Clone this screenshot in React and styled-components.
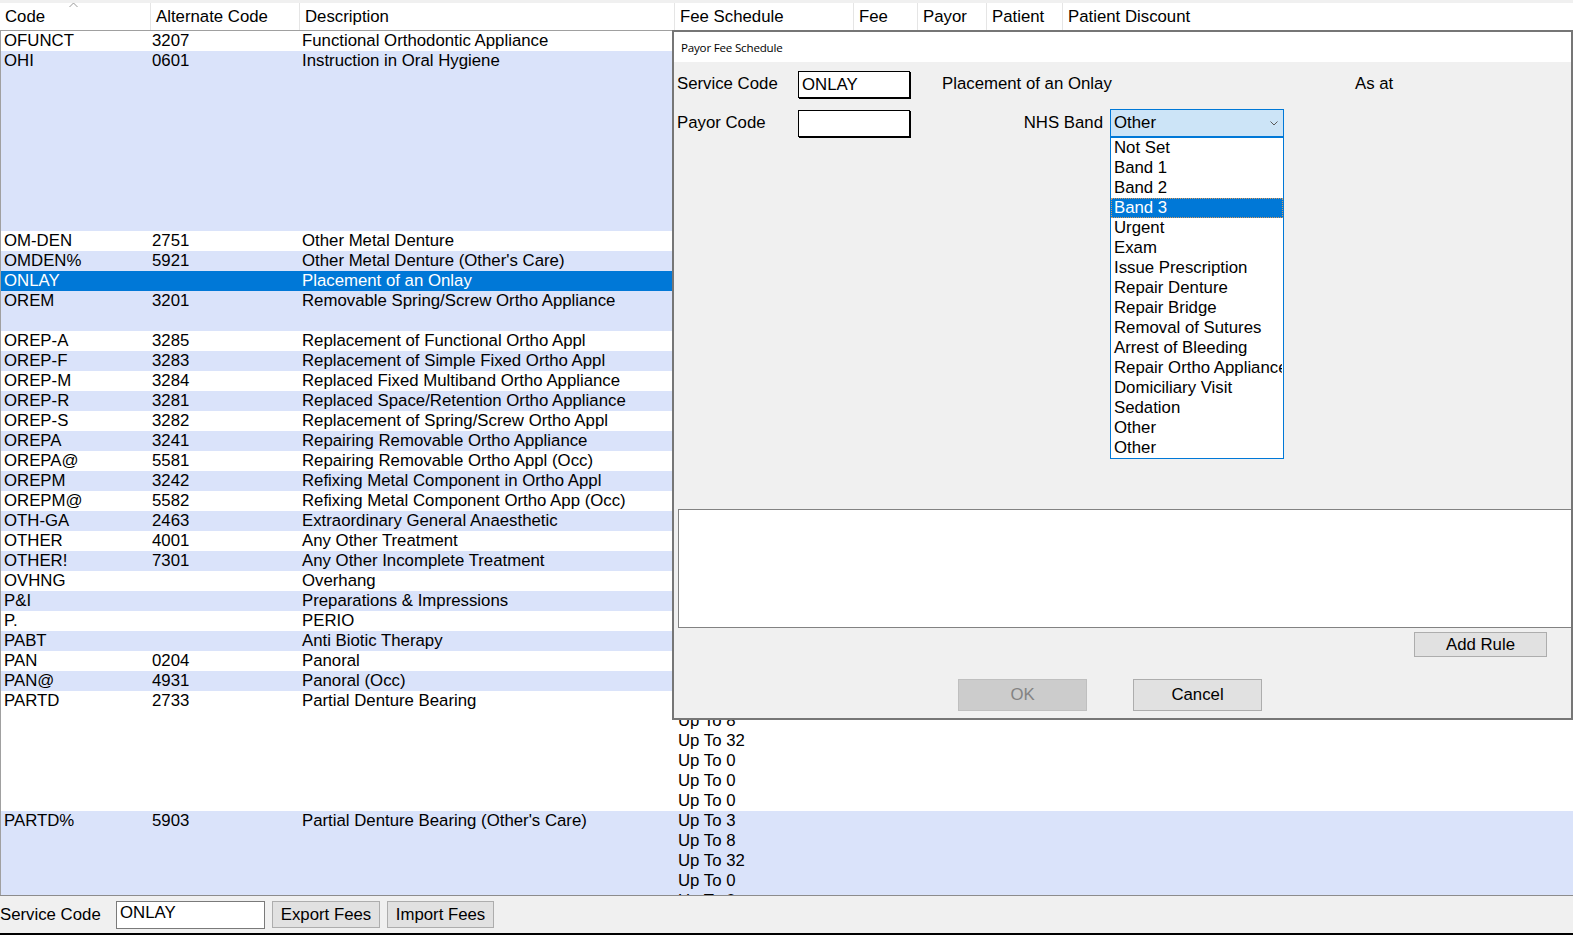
import React from "react";
import styled, { createGlobalStyle, css } from "styled-components";

const GlobalStyle = createGlobalStyle`
  html, body {
    margin: 0;
    padding: 0;
    background: #f0f0f0;
  }
  body {
    font-family: "Liberation Sans", Arial, sans-serif;
    font-size: 16.8px;
    color: #000;
  }
`;

const COLUMNS = "150px 149px 375px 179px 64px 69px 76px 1fr";
const LINE = 20;

const Window = styled.div`
  position: relative;
  width: 1573px;
  height: 935px;
  display: flex;
  flex-direction: column;
  overflow: hidden;
  background: #f0f0f0;
`;

const TopStrip = styled.div`
  height: 3px;
  flex: none;
`;

const Grid = styled.div`
  height: 893px;
  flex: none;
  display: flex;
  flex-direction: column;
  background: #fff;
  border-bottom: 1px solid #8c8c8c;
  box-sizing: border-box;
`;

const HeaderRow = styled.div`
  display: grid;
  grid-template-columns: ${COLUMNS};
  height: 28px;
  flex: none;
  box-sizing: border-box;
  border-bottom: 1px solid #a0a0a0;
  background: #fff;
`;

const HeaderCell = styled.div`
  position: relative;
  display: flex;
  align-items: center;
  padding-left: ${(p) => (p.$first ? "5px" : "5px")};
  border-left: ${(p) => (p.$first ? "none" : "1px solid #e5e5e5")};
  white-space: nowrap;
  overflow: ${(p) => (p.$first ? "visible" : "hidden")};
`;

const SortGlyph = styled.svg`
  position: absolute;
  top: -1px;
  left: 69px;
`;

const Body = styled.div`
  flex: 1;
  overflow: hidden;
  border-left: 1px solid #a0a0a0;
`;

const tones = {
  plain: css`
    background: #fff;
    color: #000;
  `,
  alt: css`
    background: #dae3fa;
    color: #000;
  `,
  selected: css`
    background: #0078d7;
    color: #fff;
  `,
};

const Row = styled.div`
  display: grid;
  grid-template-columns: ${COLUMNS};
  height: ${(p) => p.$lines * LINE}px;
  ${(p) => tones[p.$tone]}
`;

const Cell = styled.div`
  padding-left: ${(p) => p.$pad ?? 3}px;
  line-height: ${LINE}px;
  white-space: nowrap;
  overflow: hidden;
`;

const Line = styled.div`
  height: ${LINE}px;
  line-height: ${LINE}px;
`;

const Footer = styled.div`
  height: 37px;
  flex: none;
  display: flex;
  align-items: center;
  gap: 7px;
`;

const FooterLabel = styled.div`
  width: 109px;
  white-space: nowrap;
`;

const FooterInput = styled.div`
  width: 149px;
  height: 28px;
  box-sizing: border-box;
  border: 1px solid #7a7a7a;
  background: #fff;
  padding-left: 3px;
  line-height: 22px;
`;

const Button = styled.div`
  width: ${(p) => p.$w}px;
  height: ${(p) => p.$h}px;
  box-sizing: border-box;
  display: flex;
  align-items: center;
  justify-content: center;
  background: ${(p) => (p.$disabled ? "#cccccc" : "#e1e1e1")};
  border: 1px solid ${(p) => (p.$disabled ? "#bfbfbf" : "#adadad")};
  color: ${(p) => (p.$disabled ? "#838383" : "#000")};
  white-space: nowrap;
`;

const BlackBar = styled.div`
  height: 2px;
  flex: none;
  background: #000;
`;

/* modal dialog lying over the grid */
const Dialog = styled.div`
  position: absolute;
  top: 30px;
  left: 672px;
  width: 901px;
  height: 690px;
  box-sizing: border-box;
  border: 2px solid #767676;
  background: #f0f0f0;
  display: flex;
  flex-direction: column;
  overflow: hidden;
`;

const TitleBar = styled.div`
  height: 30px;
  flex: none;
  background: #fff;
  display: flex;
  align-items: center;
  padding-left: 7px;
  font-family: "Open Sans", "Noto Sans", sans-serif;
  font-size: 11.6px;
  letter-spacing: -0.2px;
`;

const Form = styled.div`
  padding: 8px 0 0 3px;
  display: flex;
  flex-direction: column;
`;

const FieldRow = styled.div`
  display: flex;
  align-items: center;
  height: 28px;
  margin-top: ${(p) => p.$gap || 0}px;
`;

const Label = styled.div`
  width: ${(p) => p.$w}px;
  flex: none;
  white-space: nowrap;
  text-align: ${(p) => (p.$right ? "right" : "left")};
  padding-right: ${(p) => (p.$right ? "7px" : "0")};
  padding-left: ${(p) => p.$offset || 0}px;
  box-sizing: border-box;
`;

const TextBox = styled.div`
  width: 112px;
  height: 27px;
  flex: none;
  box-sizing: border-box;
  border: 1px solid #000;
  box-shadow: 1px 1px 0 #000;
  background: #fff;
  padding-left: 3px;
  line-height: 25px;
`;

const ComboWrap = styled.div`
  position: relative;
  width: 174px;
  height: 28px;
  flex: none;
`;

const Combo = styled.div`
  height: 100%;
  box-sizing: border-box;
  border: 1px solid #0078d7;
  background: #cce4f7;
  display: flex;
  align-items: center;
  justify-content: space-between;
  padding: 0 5px 0 3px;
`;

const DropList = styled.div`
  position: absolute;
  top: 100%;
  left: 0;
  width: 100%;
  box-sizing: border-box;
  border: 1px solid #0078d7;
  background: #fff;
  z-index: 2;
`;

const DropItem = styled.div`
  height: 20px;
  line-height: 18px;
  box-sizing: border-box;
  padding-left: 2px;
  white-space: nowrap;
  overflow: hidden;
  ${(p) =>
    p.$active
      ? css`
          background: #0078d7;
          color: #fff;
          border: 1px dotted #d79a5e;
        `
      : css`
          border: 1px solid transparent;
        `}
`;

const RulesBox = styled.div`
  margin: 372px 0 0 1px;
  height: 119px;
  width: calc(100% + 20px);
  box-sizing: border-box;
  border: 1px solid #828282;
  background: #fff;
`;

const ButtonRow = styled.div`
  display: flex;
  gap: ${(p) => p.$gap || 0}px;
  justify-content: ${(p) => (p.$end ? "flex-end" : "flex-start")};
  padding: ${(p) => p.$pad};
  margin-top: ${(p) => p.$top}px;
`;

const codes = [
  { code: "OFUNCT", alt: "3207", desc: "Functional Orthodontic Appliance", fees: ["Up To 0"] },
  {
    code: "OHI",
    alt: "0601",
    desc: "Instruction in Oral Hygiene",
    fees: ["Up To 3", "Up To 8", "Up To 32", "Up To 0", "Up To 0", "Up To 0", "Up To 0", "Up To 0", "Up To 0"],
  },
  { code: "OM-DEN", alt: "2751", desc: "Other Metal Denture", fees: ["Up To 0"] },
  { code: "OMDEN%", alt: "5921", desc: "Other Metal Denture (Other's Care)", fees: ["Up To 0"] },
  { code: "ONLAY", alt: "", desc: "Placement of an Onlay", fees: [], selected: true },
  { code: "OREM", alt: "3201", desc: "Removable Spring/Screw Ortho Appliance", fees: ["Up To 0", "Up To 0"] },
  { code: "OREP-A", alt: "3285", desc: "Replacement of Functional Ortho Appl", fees: ["Up To 0"] },
  { code: "OREP-F", alt: "3283", desc: "Replacement of Simple Fixed Ortho Appl", fees: ["Up To 0"] },
  { code: "OREP-M", alt: "3284", desc: "Replaced Fixed Multiband Ortho Appliance", fees: ["Up To 0"] },
  { code: "OREP-R", alt: "3281", desc: "Replaced Space/Retention Ortho Appliance", fees: ["Up To 0"] },
  { code: "OREP-S", alt: "3282", desc: "Replacement of Spring/Screw Ortho Appl", fees: ["Up To 0"] },
  { code: "OREPA", alt: "3241", desc: "Repairing Removable Ortho Appliance", fees: ["Up To 0"] },
  { code: "OREPA@", alt: "5581", desc: "Repairing Removable Ortho Appl (Occ)", fees: ["Up To 0"] },
  { code: "OREPM", alt: "3242", desc: "Refixing Metal Component in Ortho Appl", fees: ["Up To 0"] },
  { code: "OREPM@", alt: "5582", desc: "Refixing Metal Component Ortho App (Occ)", fees: ["Up To 0"] },
  { code: "OTH-GA", alt: "2463", desc: "Extraordinary General Anaesthetic", fees: ["Up To 0"] },
  { code: "OTHER", alt: "4001", desc: "Any Other Treatment", fees: ["Up To 0"] },
  { code: "OTHER!", alt: "7301", desc: "Any Other Incomplete Treatment", fees: ["Up To 0"] },
  { code: "OVHNG", alt: "", desc: "Overhang", fees: ["Up To 0"] },
  { code: "P&I", alt: "", desc: "Preparations & Impressions", fees: ["Up To 0"] },
  { code: "P.", alt: "", desc: "PERIO", fees: ["Up To 0"] },
  { code: "PABT", alt: "", desc: "Anti Biotic Therapy", fees: ["Up To 0"] },
  { code: "PAN", alt: "0204", desc: "Panoral", fees: ["Up To 0"] },
  { code: "PAN@", alt: "4931", desc: "Panoral (Occ)", fees: ["Up To 0"] },
  {
    code: "PARTD",
    alt: "2733",
    desc: "Partial Denture Bearing",
    fees: ["Up To 3", "Up To 8", "Up To 32", "Up To 0", "Up To 0", "Up To 0"],
  },
  {
    code: "PARTD%",
    alt: "5903",
    desc: "Partial Denture Bearing (Other's Care)",
    fees: ["Up To 3", "Up To 8", "Up To 32", "Up To 0", "Up To 0", "Up To 0"],
  },
];

const headers = ["Code", "Alternate Code", "Description", "Fee Schedule", "Fee", "Payor", "Patient", "Patient Discount"];

const bands = [
  "Not Set",
  "Band 1",
  "Band 2",
  "Band 3",
  "Urgent",
  "Exam",
  "Issue Prescription",
  "Repair Denture",
  "Repair Bridge",
  "Removal of Sutures",
  "Arrest of Bleeding",
  "Repair Ortho Appliance",
  "Domiciliary Visit",
  "Sedation",
  "Other",
  "Other",
];

function CodeRow({ item, index }) {
  const lines = Math.max(1, item.fees.length);
  const tone = item.selected ? "selected" : index % 2 ? "alt" : "plain";
  return (
    <Row $lines={lines} $tone={tone}>
      <Cell>{item.code}</Cell>
      <Cell $pad={1}>{item.alt}</Cell>
      <Cell $pad={2}>{item.desc}</Cell>
      <Cell>
        {item.fees.map((f, i) => (
          <Line key={i}>{f}</Line>
        ))}
      </Cell>
      <Cell />
      <Cell />
      <Cell />
      <Cell />
    </Row>
  );
}

function PayorFeeDialog() {
  return (
    <Dialog>
      <TitleBar>Payor Fee Schedule</TitleBar>
      <Form>
        <FieldRow>
          <Label $w={121}>Service Code</Label>
          <TextBox>ONLAY</TextBox>
          <Label $w={445} $offset={32}>Placement of an Onlay</Label>
          <Label $w={80}>As at</Label>
        </FieldRow>
        <FieldRow $gap={11}>
          <Label $w={121}>Payor Code</Label>
          <TextBox />
          <Label $w={200} $right>NHS Band</Label>
          <ComboWrap>
            <Combo>
              <span>Other</span>
              <svg width="8" height="5" viewBox="0 0 8 5">
                <polyline points="0.5,0.5 4,4 7.5,0.5" fill="none" stroke="#5a5a5a" strokeWidth="1" />
              </svg>
            </Combo>
            <DropList>
              {bands.map((b, i) => (
                <DropItem key={i} $active={b === "Band 3"}>
                  {b}
                </DropItem>
              ))}
            </DropList>
          </ComboWrap>
        </FieldRow>
        <RulesBox />
        <ButtonRow $end $pad="0 24px 0 0" $top={4}>
          <Button $w={133} $h={25}>Add Rule</Button>
        </ButtonRow>
        <ButtonRow $gap={46} $pad="0 0 0 281px" $top={22}>
          <Button $w={129} $h={32} $disabled>OK</Button>
          <Button $w={129} $h={32}>Cancel</Button>
        </ButtonRow>
      </Form>
    </Dialog>
  );
}

export default function App() {
  return (
    <Window>
      <GlobalStyle />
      <TopStrip />
      <Grid>
        <HeaderRow>
          {headers.map((h, i) => (
            <HeaderCell key={h} $first={i === 0}>
              {h}
              {i === 0 && (
                <SortGlyph width="9" height="6" viewBox="0 0 9 6">
                  <polyline points="0.5,5 4.5,1 8.5,5" fill="none" stroke="#9a9a9a" strokeWidth="1" />
                </SortGlyph>
              )}
            </HeaderCell>
          ))}
        </HeaderRow>
        <Body>
          {codes.map((c, i) => (
            <CodeRow key={c.code} item={c} index={i} />
          ))}
        </Body>
      </Grid>
      <Footer>
        <FooterLabel>Service Code</FooterLabel>
        <FooterInput>ONLAY</FooterInput>
        <Button $w={108} $h={27}>Export Fees</Button>
        <Button $w={107} $h={27}>Import Fees</Button>
      </Footer>
      <BlackBar />
      <PayorFeeDialog />
    </Window>
  );
}
